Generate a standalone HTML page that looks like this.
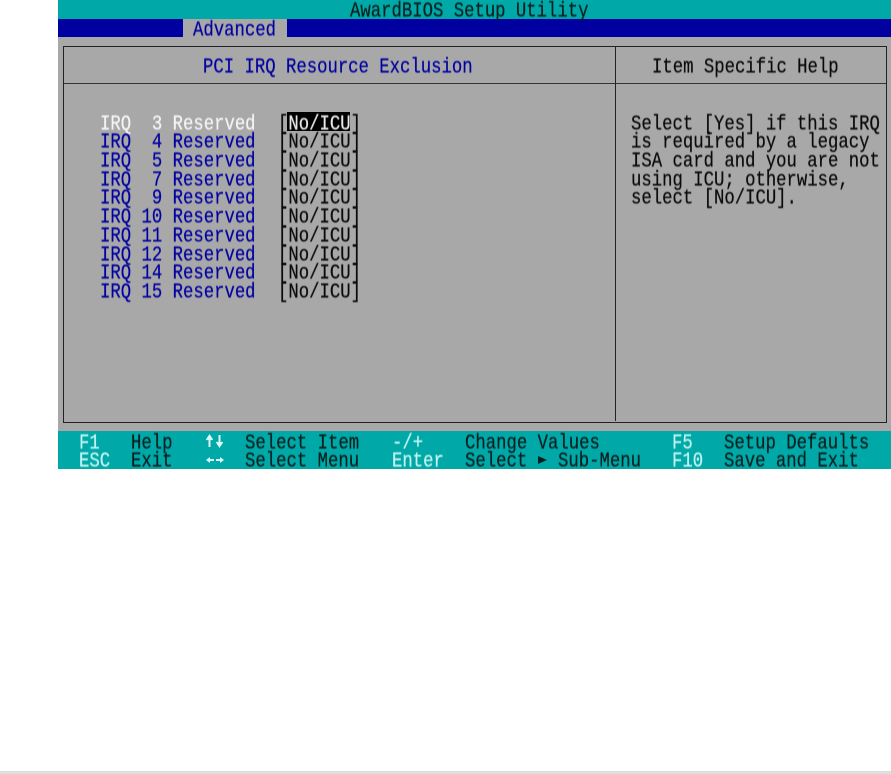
<!DOCTYPE html>
<html><head><meta charset="utf-8">
<style>
html,body{margin:0;padding:0;background:#fff;width:891px;height:774px;overflow:hidden}
#p{position:absolute;left:0;top:0;width:891px;height:774px;overflow:hidden;font-family:"Liberation Mono",monospace;font-size:17.3px}
.b{position:absolute}
.t{position:absolute;white-space:pre;line-height:18px;height:18px;transform-origin:0 50%;transform:translateY(3px) scaleY(1.24);color:#0a0a0a;-webkit-text-stroke:.2px currentColor;filter:blur(.35px)}
.u{color:#0000a0}.w{color:#f4f4f4}.k{color:#06201f}.c{color:#c4f4f0}
svg{position:absolute;filter:blur(.25px)}
</style></head><body><div id="p">
<div class="b" style="left:58px;top:0;width:833px;height:19px;background:#00a8a8"></div>
<div class="b" style="left:58px;top:19px;width:833px;height:18px;background:#0000a0"></div>
<div class="b" style="left:58px;top:37px;width:833px;height:394px;background:#a8a8a8"></div>
<div class="b" style="left:58px;top:431px;width:833px;height:38px;background:#00a8a8"></div>
<div class="b" style="left:183px;top:19px;width:104px;height:18px;background:#a8a8a8"></div>
<div class="b" style="left:63px;top:46px;width:822px;height:375px;border:1px solid #222"></div>
<div class="b" style="left:64px;top:83px;width:822px;height:1px;background:#333"></div>
<div class="b" style="left:615px;top:46px;width:1px;height:375px;background:#222"></div>
<div class="b" style="left:287px;top:112px;width:63px;height:19px;background:#000"></div>
<div class="b" style="left:0;top:771px;width:891px;height:3px;background:#dedede"></div>

<span class="t k" style="left:350px;top:1px">AwardBIOS Setup Utility</span>
<span class="t u" style="left:193px;top:20px">Advanced</span>
<span class="t u" style="left:203px;top:57px">PCI IRQ Resource Exclusion</span>
<span class="t" style="left:652px;top:57px">Item Specific Help</span>

<span class="t w" style="left:100px;top:114px">IRQ  3 Reserved</span><span class="t" style="left:278px;top:114px">[<span style="color:#e8e8e8">No/ICU</span>]</span>
<span class="t u" style="left:100px;top:132px">IRQ  4 Reserved</span><span class="t" style="left:278px;top:132px">[No/ICU]</span>
<span class="t u" style="left:100px;top:151px">IRQ  5 Reserved</span><span class="t" style="left:278px;top:151px">[No/ICU]</span>
<span class="t u" style="left:100px;top:170px">IRQ  7 Reserved</span><span class="t" style="left:278px;top:170px">[No/ICU]</span>
<span class="t u" style="left:100px;top:188px">IRQ  9 Reserved</span><span class="t" style="left:278px;top:188px">[No/ICU]</span>
<span class="t u" style="left:100px;top:207px">IRQ 10 Reserved</span><span class="t" style="left:278px;top:207px">[No/ICU]</span>
<span class="t u" style="left:100px;top:226px">IRQ 11 Reserved</span><span class="t" style="left:278px;top:226px">[No/ICU]</span>
<span class="t u" style="left:100px;top:245px">IRQ 12 Reserved</span><span class="t" style="left:278px;top:245px">[No/ICU]</span>
<span class="t u" style="left:100px;top:263px">IRQ 14 Reserved</span><span class="t" style="left:278px;top:263px">[No/ICU]</span>
<span class="t u" style="left:100px;top:282px">IRQ 15 Reserved</span><span class="t" style="left:278px;top:282px">[No/ICU]</span>

<span class="t" style="left:631px;top:114px">Select [Yes] if this IRQ</span>
<span class="t" style="left:631px;top:132px">is required by a legacy</span>
<span class="t" style="left:631px;top:151px">ISA card and you are not</span>
<span class="t" style="left:631px;top:170px">using ICU; otherwise,</span>
<span class="t" style="left:631px;top:188px">select [No/ICU].</span>

<span class="t c" style="left:79px;top:433px">F1</span>
<span class="t k" style="left:131px;top:433px">Help</span>
<svg style="left:205px;top:434px" width="20" height="14" viewBox="0 0 20 14" fill="none" stroke="#d8f8f4" stroke-width="2">
<path d="M4.5 13V2"/><path d="M1.5 6L4.5 1.5L7.5 6" stroke-width="1.6" fill="#d8f8f4"/></svg>
<svg style="left:205px;top:434px" width="20" height="14" viewBox="0 0 20 14" fill="none" stroke="#d8f8f4" stroke-width="2">
<path d="M14.5 1V12"/><path d="M11.5 8L14.5 12.5L17.5 8" stroke-width="1.6" fill="#d8f8f4"/></svg>
<span class="t k" style="left:245px;top:433px">Select Item</span>
<span class="t c" style="left:392px;top:433px">-/+</span>
<span class="t k" style="left:465px;top:433px">Change Values</span>
<span class="t c" style="left:672px;top:433px">F5</span>
<span class="t k" style="left:724px;top:433px">Setup Defaults</span>

<span class="t c" style="left:79px;top:451px">ESC</span>
<span class="t k" style="left:131px;top:451px">Exit</span>
<svg style="left:205px;top:455px" width="20" height="10" viewBox="0 0 20 10" fill="#d8f8f4" stroke="none">
<path d="M1 5L5 2V4H9V6H5V8Z"/><path d="M19 5L15 2V4H11V6H15V8Z"/></svg>
<span class="t k" style="left:245px;top:451px">Select Menu</span>
<span class="t c" style="left:392px;top:451px">Enter</span>
<span class="t k" style="left:465px;top:451px">Select</span>
<svg style="left:537px;top:455px" width="11" height="10" viewBox="0 0 11 10"><path d="M1 1L10 5L1 9Z" fill="#06201f"/></svg>
<span class="t k" style="left:558px;top:451px">Sub-Menu</span>
<span class="t c" style="left:672px;top:451px">F10</span>
<span class="t k" style="left:724px;top:451px">Save and Exit</span>
</div></body></html>
